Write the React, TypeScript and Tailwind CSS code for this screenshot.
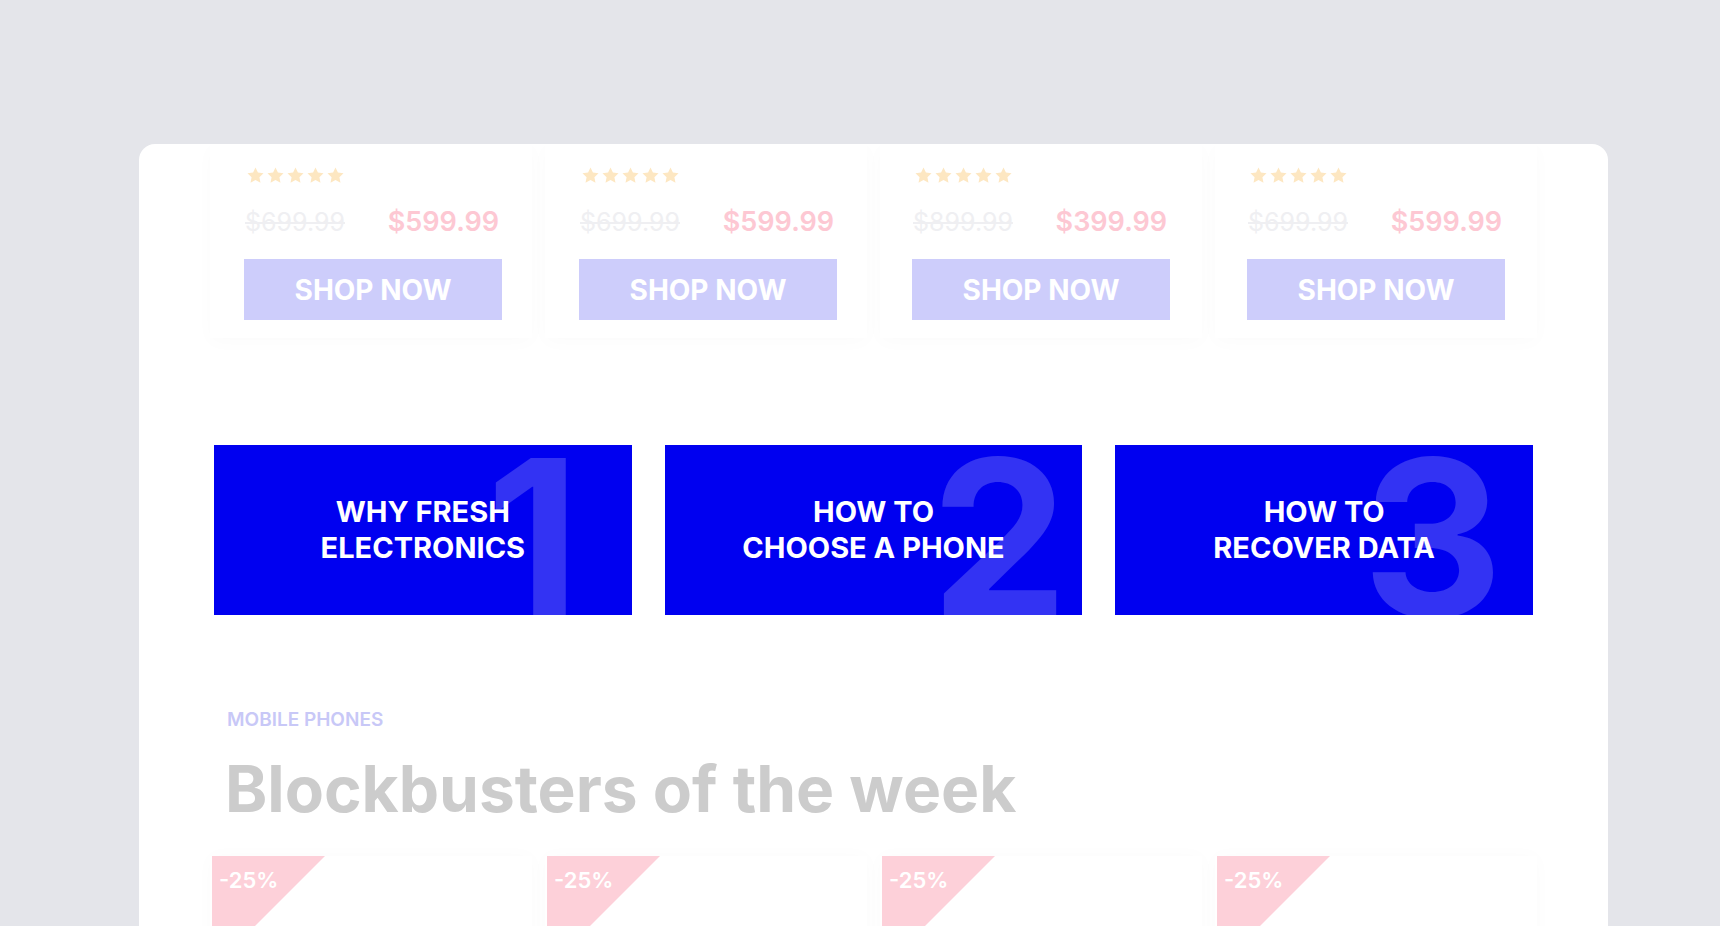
import React from "react";

const Star = () => (
  <svg width="19" height="19" viewBox="0 0 24 24" className="block">
    <path
      d="M12 1.8l3.05 6.5 7.1.9-5.2 4.9 1.35 7.05L12 17.7l-6.3 3.45 1.35-7.05-5.2-4.9 7.1-.9z"
      fill="#fde7c2"
    />
  </svg>
);

const topProducts = [
  { old: "$699.99", price: "$599.99", pad: "pl-[34px] pr-[30px]" },
  { old: "$699.99", price: "$599.99", pad: "pl-[34px] pr-[30px]" },
  { old: "$899.99", price: "$399.99", pad: "pl-[32px] pr-[32px]" },
  { old: "$699.99", price: "$599.99", pad: "pl-[32px] pr-[32px]" },
];

const guides = [
  { lines: ["WHY FRESH", "ELECTRONICS"], num: "1", pos: "left-[272px]" },
  { lines: ["HOW TO", "CHOOSE A PHONE"], num: "2", pos: "left-[266px]" },
  { lines: ["HOW TO", "RECOVER DATA"], num: "3", pos: "left-[247px]" },
];

export default function App() {
  return (
    <div className="min-h-screen bg-[#e4e5ea] pt-[144px] font-['Inter','Noto_Sans',sans-serif]">
      <div className="ml-[139px] w-[1469px] h-[782px] overflow-hidden rounded-t-[16px] bg-white">
        {/* product cards (top, faded) */}
        <div className="mx-auto grid w-[1327px] grid-cols-4 gap-[13px]">
          {topProducts.map((p, i) => (
            <div
              key={i}
              className={`bg-white ${p.pad} pt-[22px] pb-[18px] shadow-[0_4px_18px_rgba(0,0,0,0.018)]`}
            >
              <div className="ml-[2px] flex h-[19px] gap-[1px]">
                <Star />
                <Star />
                <Star />
                <Star />
                <Star />
              </div>
              <div className="mt-[20px] flex h-[34px] items-center justify-between pl-[1px] pr-[3px]">
                <span className="text-[25px] font-normal leading-[34px] text-[#efeff2] line-through decoration-[1.5px]">
                  {p.old}
                </span>
                <span className="text-[27px] font-semibold leading-[34px] text-[#fdc8d3]">
                  {p.price}
                </span>
              </div>
              <div className="mt-[20px] flex h-[61px] items-center justify-center bg-[#cdcdfb] text-[28px] font-bold text-white">
                SHOP NOW
              </div>
            </div>
          ))}
        </div>

        {/* guide banners */}
        <div className="mx-auto mt-[107px] grid w-[1319px] grid-cols-3 gap-[33px]">
          {guides.map((g, i) => (
            <div
              key={i}
              className="relative flex h-[170px] items-center justify-center overflow-hidden bg-[#0000f0]"
            >
              <span
                className={`absolute top-[-16px] ${g.pos} text-[218px] font-bold leading-none text-white/20 select-none`}
              >
                {g.num}
              </span>
              <div className="relative text-center text-[29px] font-bold leading-[36px] text-white">
                <div>{g.lines[0]}</div>
                <div>{g.lines[1]}</div>
              </div>
            </div>
          ))}
        </div>

        {/* section header */}
        <div className="mx-auto mt-[93px] w-[1327px] pl-[15px]">
          <div className="pl-[2px] text-[19px] font-semibold leading-[24px] text-[#c8c8f7]">
            MOBILE PHONES
          </div>
          <h2 className="mt-[19px] text-[64px] font-bold leading-[76px] tracking-normal text-[#cccccc]">
            Blockbusters of the week
          </h2>
        </div>

        {/* product cards (bottom) */}
        <div className="mx-auto mt-[29px] grid w-[1327px] grid-cols-4 gap-[13px]">
          {[0, 1, 2, 3].map((i) => (
            <div
              key={i}
              className="relative h-[300px] bg-white shadow-[0_0_18px_rgba(0,0,0,0.02)]"
            >
              <div className="absolute left-[2px] top-0 h-[113px] w-[113px] bg-[#fdd0d9] [clip-path:polygon(0_0,100%_0,0_100%)]" />
              <span className="absolute left-[9px] top-[11px] text-[22px] font-semibold leading-[26px] text-white">
                -25%
              </span>
            </div>
          ))}
        </div>
      </div>
    </div>
  );
}
